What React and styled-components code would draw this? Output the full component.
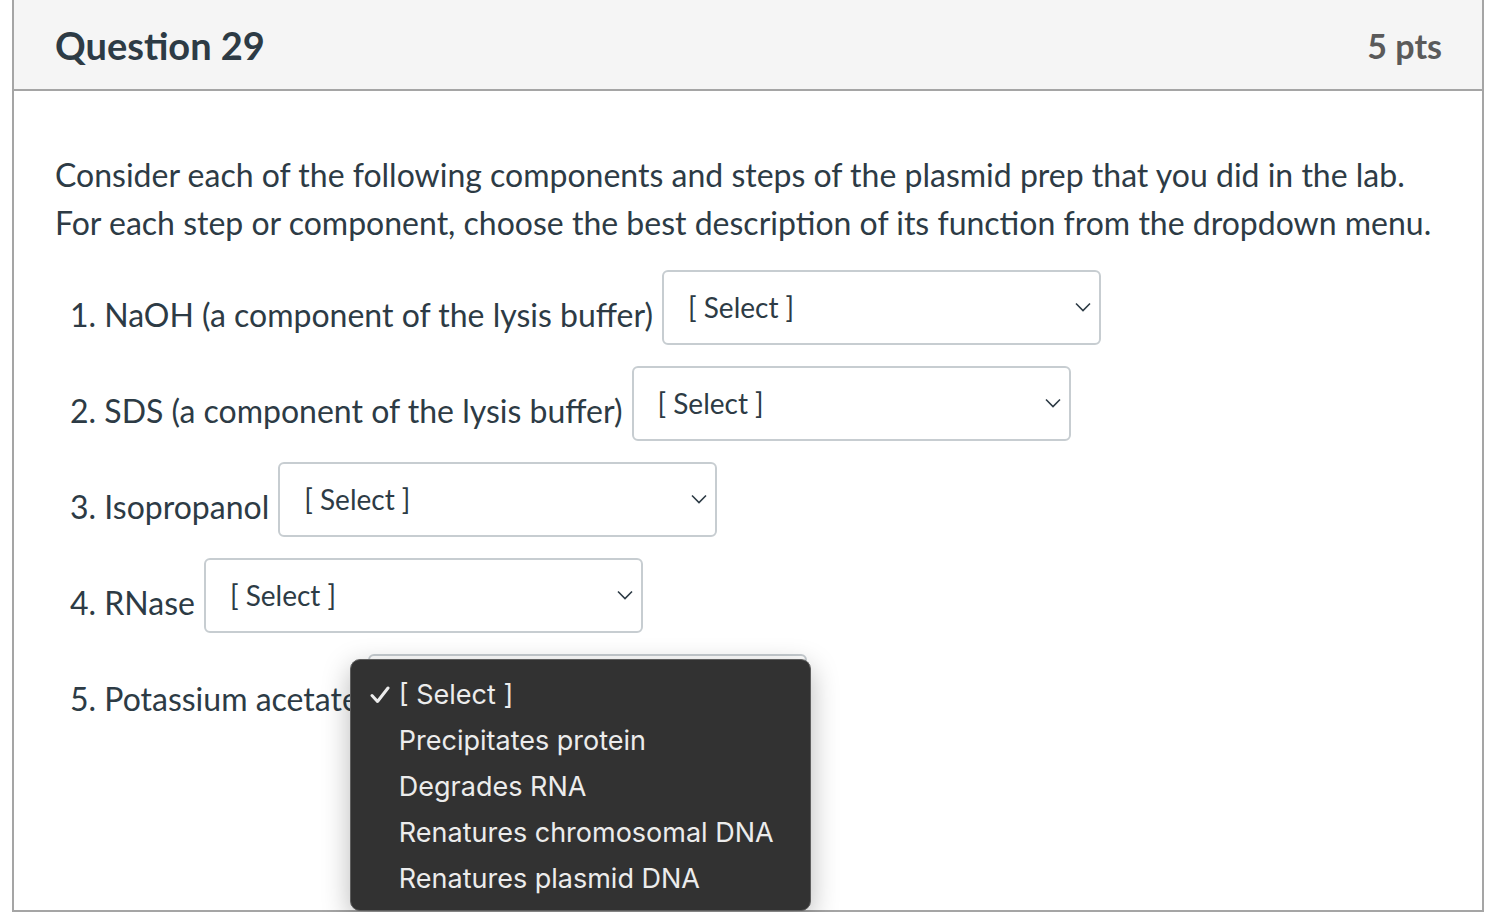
import React from "react";
import styled, { createGlobalStyle } from "styled-components";

const GlobalStyle = createGlobalStyle`
  html, body {
    margin: 0;
    background: #fff;
    overflow: hidden;
  }
  body {
    font-family: Lato, "Liberation Sans", sans-serif;
    color: #2d3b45;
  }
`;

const Card = styled.div`
  margin: 0 18px 0 12px;
  height: 912px;
  box-sizing: border-box;
  border: 2px solid #a5a5a5;
  border-top: none;
  display: flex;
  flex-direction: column;
`;

const Header = styled.div`
  height: 89px;
  background: #f5f5f5;
  border-bottom: 2px solid #a5a5a5;
  display: flex;
  align-items: center;
  justify-content: space-between;
  padding: 0 40px 0 41px;
`;

const Title = styled.h2`
  margin: 0;
  font-size: 38px;
  font-weight: 700;
  color: #2d3b45;
`;

const Points = styled.div`
  font-size: 34px;
  font-weight: 700;
  color: #5a5a5a;
  padding-top: 2px;
`;

const Body = styled.div`
  padding: 60px 41px 0;
  flex: 1;
`;

const Text = styled.p`
  margin: 0 0 23px;
  font-size: 32px;
  line-height: 48px;
  white-space: nowrap;
`;

const Rows = styled.div`
  display: flex;
  flex-direction: column;
  gap: 21px;
  padding-left: 15px;
`;

const Row = styled.div`
  display: flex;
  align-items: center;
  gap: 9px;
  position: relative;
`;

const Label = styled.span`
  font-size: 32px;
  padding-top: 14px;
  white-space: nowrap;
`;

const SelectBox = styled.div`
  width: 439px;
  height: 75px;
  box-sizing: border-box;
  border: 2px solid #c7cdd1;
  border-radius: 6px;
  background: #fff;
  display: flex;
  align-items: center;
  justify-content: space-between;
  padding: 0 8px 1px 24px;
  font-size: 28px;
  color: #2d3b45;
  position: relative;
`;

const Chevron = () => (
  <svg width="16" height="10" viewBox="0 0 16 10" style={{ marginTop: 0 }}>
    <polyline points="1,1.5 8,8.5 15,1.5" fill="none" stroke="#2d3b45" strokeWidth="1.6" />
  </svg>
);

const Menu = styled.ul`
  position: absolute;
  left: -20px;
  top: 3px;
  width: 461px;
  height: 252px;
  box-sizing: border-box;
  margin: 0;
  padding: 11px 0 0;
  list-style: none;
  background: #323232;
  border: 1.5px solid #5e5e5e;
  border-radius: 10px;
  box-shadow: 0 8px 28px rgba(0, 0, 0, 0.28);
  font-family: Inter, "Noto Sans", sans-serif;
  z-index: 5;
`;

const Item = styled.li`
  height: 46px;
  display: flex;
  align-items: center;
  font-size: 27px;
  color: #ececec;
  padding-left: 48px;
  position: relative;
`;

const Check = () => (
  <svg
    width="20"
    height="18"
    viewBox="0 0 20 18"
    style={{ position: "absolute", left: 19, top: 15 }}
  >
    <path d="M2 9.5 L7.5 15.5 L18 2" fill="none" stroke="#ececec" strokeWidth="3" strokeLinecap="round" strokeLinejoin="round" />
  </svg>
);

const items = [
  { label: "1. NaOH (a component of the lysis buffer)" },
  { label: "2. SDS (a component of the lysis buffer)" },
  { label: "3. Isopropanol" },
  { label: "4. RNase" },
  { label: "5. Potassium acetate", open: true },
];

const options = [
  "[ Select ]",
  "Precipitates protein",
  "Degrades RNA",
  "Renatures chromosomal DNA",
  "Renatures plasmid DNA",
];

export default function App() {
  return (
    <>
      <GlobalStyle />
      <Card>
        <Header>
          <Title>Question 29</Title>
          <Points>5 pts</Points>
        </Header>
        <Body>
          <Text>
            Consider each of the following components and steps of the plasmid prep that you did in the lab.
            <br />
            For each step or component, choose the best description of its function from the dropdown menu.
          </Text>
          <Rows>
            {items.map((it) => (
              <Row key={it.label}>
                <Label>{it.label}</Label>
                <SelectBox>
                  <span>[ Select ]</span>
                  <Chevron />
                  {it.open && (
                    <Menu>
                      {options.map((o, i) => (
                        <Item key={o}>
                          {i === 0 && <Check />}
                          {o}
                        </Item>
                      ))}
                    </Menu>
                  )}
                </SelectBox>
              </Row>
            ))}
          </Rows>
        </Body>
      </Card>
    </>
  );
}
